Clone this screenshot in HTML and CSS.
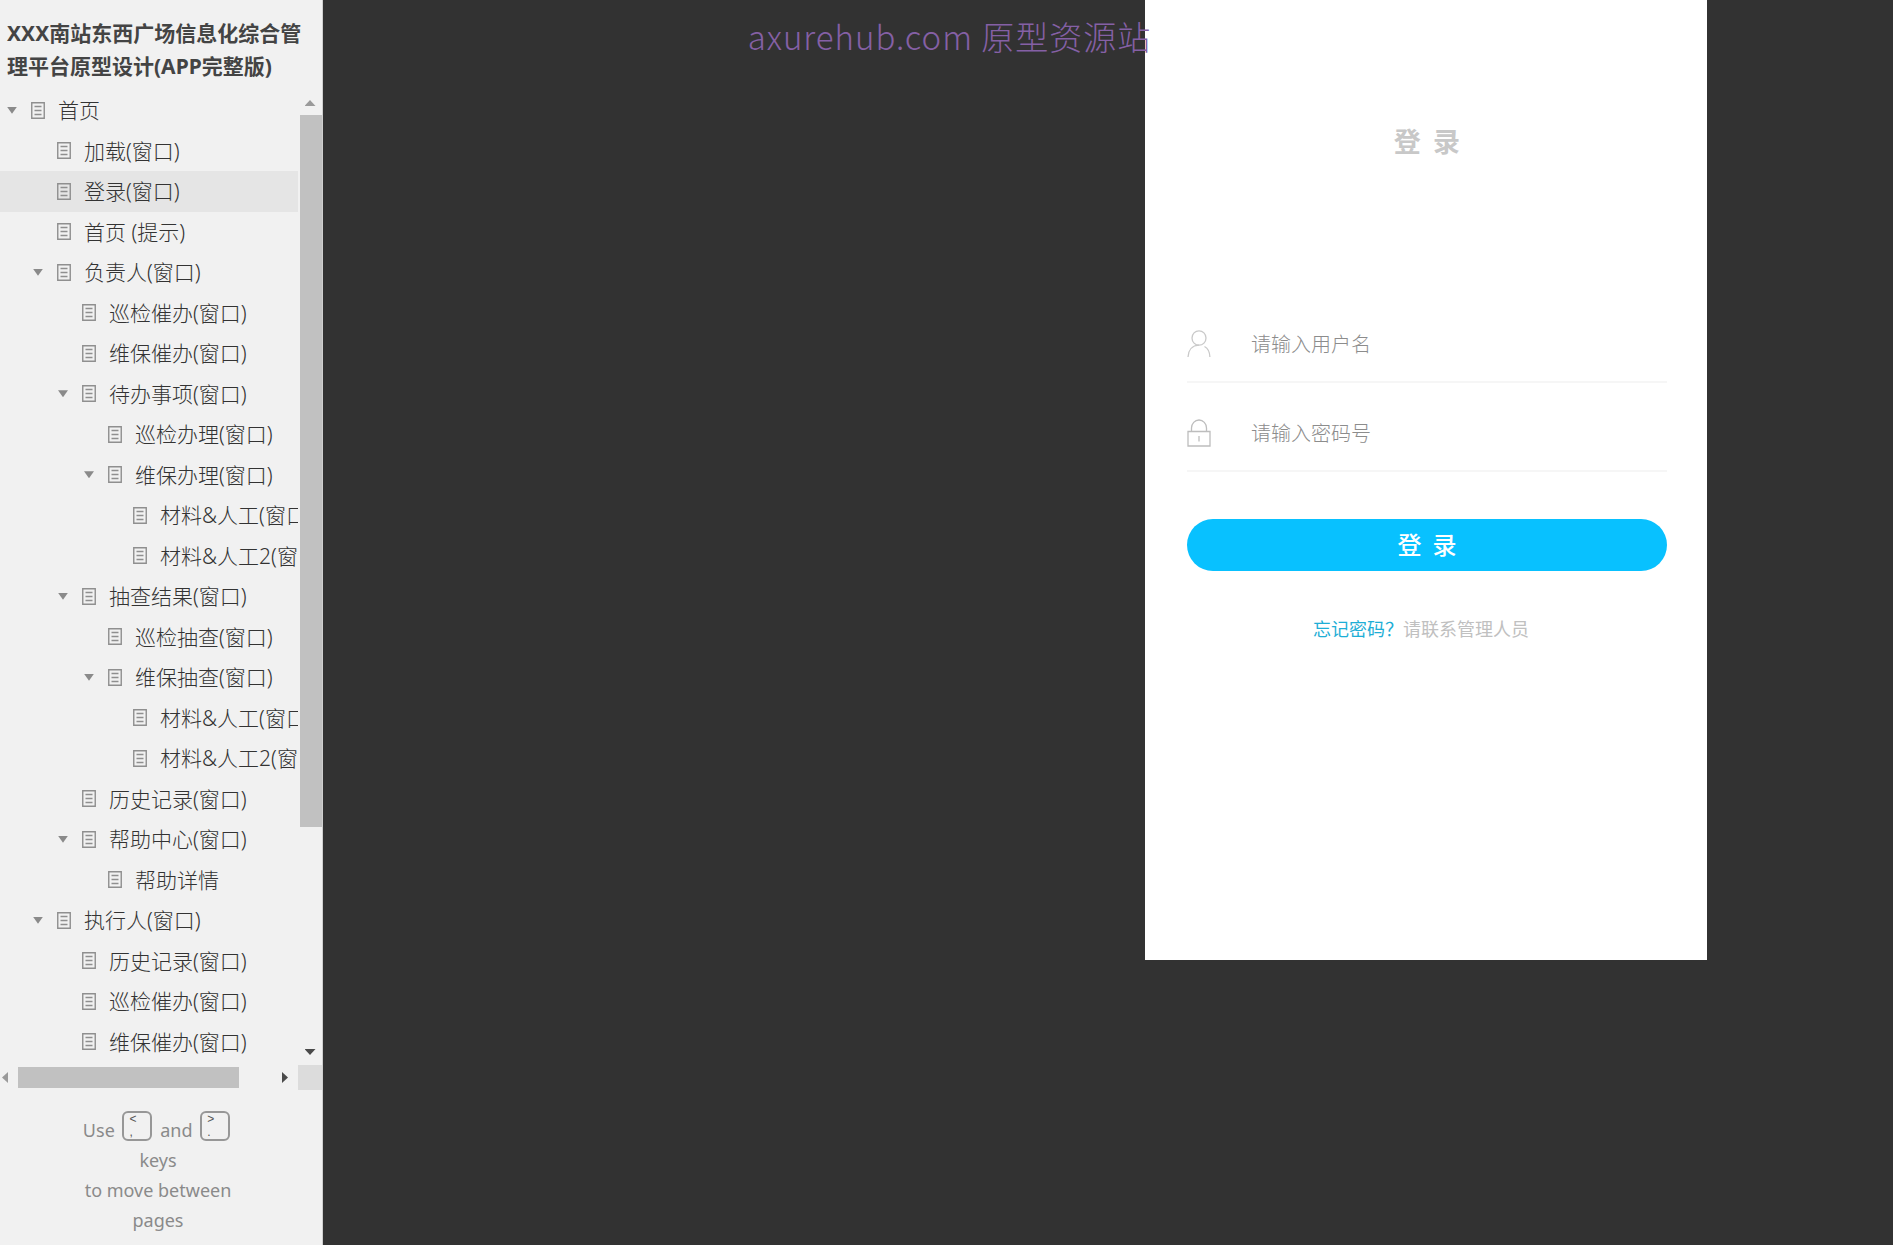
FILE: index.html
```html
<!DOCTYPE html>
<html lang="zh-CN">
<head>
  <meta charset="UTF-8">
  <meta name="viewport" content="width=device-width, initial-scale=1.0">
  <title>登录(窗口)</title>
  <link rel="stylesheet" href="styles.css">
</head>
<body>
  <svg width="0" height="0" class="sprite" aria-hidden="true">
    <symbol id="page" viewBox="0 0 14 17">
      <path d="M.75.75h12.5v15.5H.75zM3.500 4.500h7M3.500 8.500h7M3.500 12.500h7" fill="none" stroke="#8f8f8f" stroke-width="1.4"/>
    </symbol>
  </svg>

  <aside class="sidebar">
    <h1 class="project-name">XXX南站东西广场信息化综合管理平台原型设计(APP完整版)</h1>

    <div class="tree-wrap">
      <ul class="tree" id="tree"></ul>
      <div class="scroll-y">
        <span class="arrow arrow-up"></span>
        <div class="track-y"><div class="thumb-y"></div></div>
        <span class="arrow arrow-down"></span>
      </div>
    </div>

    <div class="scroll-x">
      <span class="arrow arrow-left"></span>
      <div class="track-x"><div class="thumb-x"></div></div>
      <span class="arrow arrow-right"></span>
      <div class="corner"></div>
    </div>

    <footer class="hint">
      <p>Use <kbd><span>&lt;</span><span>,</span></kbd> and <kbd><span>&gt;</span><span>.</span></kbd> keys<br>to move between pages</p>
    </footer>
  </aside>

  <main class="stage">
    <form class="phone">
      <h2 class="phone-title">登&nbsp; 录</h2>

      <div class="field">
        <label for="username" aria-label="用户名">
          <svg width="24" height="28" viewBox="0 0 24 28" fill="none" stroke="#c9c9c9" stroke-width="1.3">
            <ellipse cx="12" cy="8" rx="7" ry="7.200"/>
            <path d="M1 27c.3-6.500 4-11.500 11-11.800M17.500 16.500c3.500 1.800 5.200 5.500 5.400 10.500"/>
          </svg>
        </label>
        <input type="text" id="username" placeholder="请输入用户名">
      </div>

      <div class="field">
        <label for="password" aria-label="密码">
          <svg width="24" height="28" viewBox="0 0 24 28" fill="none" stroke="#bdbdbd" stroke-width="1.3">
            <path d="M1 12.500h22v14.500H1zM4.500 12.500V9a7.500 8 0 0 1 15 0v3.500M12 17v5.500"/>
          </svg>
        </label>
        <input type="password" id="password" placeholder="请输入密码号">
      </div>

      <button type="button" class="login">登&nbsp; 录</button>
      <p class="forgot"><a href="#">忘记密码？</a>请联系管理人员</p>
    </form>
  </main>

  <div class="watermark">axurehub.com 原型资源站</div>

  <script>
    // [level, name, has children]
    const pages = [
      [0, '首页', true],
      [1, '加载(窗口)'],
      [1, '登录(窗口)'],
      [1, '首页 (提示)'],
      [1, '负责人(窗口)', true],
      [2, '巡检催办(窗口)'],
      [2, '维保催办(窗口)'],
      [2, '待办事项(窗口)', true],
      [3, '巡检办理(窗口)'],
      [3, '维保办理(窗口)', true],
      [4, '材料&人工(窗口)'],
      [4, '材料&人工2(窗口)'],
      [2, '抽查结果(窗口)', true],
      [3, '巡检抽查(窗口)'],
      [3, '维保抽查(窗口)', true],
      [4, '材料&人工(窗口)'],
      [4, '材料&人工2(窗口)'],
      [2, '历史记录(窗口)'],
      [2, '帮助中心(窗口)', true],
      [3, '帮助详情'],
      [1, '执行人(窗口)', true],
      [2, '历史记录(窗口)'],
      [2, '巡检催办(窗口)'],
      [2, '维保催办(窗口)']
    ];
    const current = 2;
    const tree = document.getElementById('tree');

    pages.forEach(([level, name, open], i) => {
      const li = document.createElement('li');
      li.className = `node level-${level}` + (i === current ? ' selected' : '');
      li.innerHTML = (open ? '<button class="toggle" aria-label="折叠"></button>' : '<span class="toggle-space"></span>') +
        '<a href="#"><svg width="14" height="17" aria-hidden="true"><use href="#page"/></svg><span></span></a>';
      li.querySelector('a span').textContent = name;
      tree.appendChild(li);
    });
  </script>
</body>
</html>
```
FILE: styles.css
```css
* {
  box-sizing: border-box;
}

body {
  display: flex;
  height: 100vh;
  margin: 0;
  overflow: hidden;
  background-color: #323232;
  font-family: "Noto Sans", "Noto Sans CJK SC", sans-serif;
}

h1, h2, p, ul {
  margin: 0;
  padding: 0;
}

a {
  color: inherit;
  text-decoration: none;
}

.sprite {
  position: absolute;
}

/* sidebar */
.sidebar {
  display: flex;
  flex-direction: column;
  flex: none;
  width: 323px;
  background-color: #f1f1f1;
  border-right: 1px solid #cfcfcf;
  color: #333;
}

.project-name {
  padding: 17px 12px 7px 7px;
  font-size: 21px;
  line-height: 33px;
  color: #444;
}

.tree-wrap {
  display: flex;
  flex: 1;
  min-height: 0;
}

.tree {
  display: grid;
  grid-auto-rows: 1fr;
  flex: 1;
  min-width: 0;
  padding-bottom: 3px;
  overflow: hidden;
  list-style: none;
}

.node {
  display: flex;
  align-items: center;
  min-width: 0;
  overflow: hidden;
  font-size: 21px;
  line-height: 30px;
  font-weight: 300;
  white-space: nowrap;
}

.node a {
  display: flex;
  align-items: center;
  gap: 13px;
}

.node svg {
  flex: none;
}

.selected {
  background-color: #e5e5e5;
}

.level-0 { padding-left: 7px; }
.level-1 { padding-left: 33px; }
.level-2 { padding-left: 58px; }
.level-3 { padding-left: 84px; }
.level-4 { padding-left: 109px; }

.toggle,
.toggle-space {
  flex: none;
  width: 10px;
  height: 7px;
  margin-right: 14px;
  padding: 0;
  border: 0;
}

.toggle {
  background-color: #8a8a8a;
  clip-path: polygon(0 0, 100% 0, 50% 100%);
  cursor: pointer;
}

/* scrollbars */
.scroll-y {
  display: flex;
  flex-direction: column;
  align-items: center;
  gap: 9px;
  width: 24px;
  padding: 10px 0;
}

.track-y {
  flex: 1;
  align-self: stretch;
  padding: 0 0 0 2px;
}

.thumb-y {
  height: 77%;
  background-color: #c1c1c1;
}

.arrow {
  flex: none;
  background-color: #4a4a4a;
}

.arrow-up,
.arrow-down {
  width: 11px;
  height: 6px;
}

.arrow-left,
.arrow-right {
  width: 6px;
  height: 11px;
}

.arrow-up {
  background-color: #9a9a9a;
  clip-path: polygon(50% 0, 100% 100%, 0 100%);
}

.arrow-down {
  clip-path: polygon(0 0, 100% 0, 50% 100%);
}

.arrow-left {
  background-color: #9a9a9a;
  clip-path: polygon(100% 0, 100% 100%, 0 50%);
}

.arrow-right {
  clip-path: polygon(0 0, 100% 50%, 0 100%);
}

.scroll-x {
  display: flex;
  align-items: center;
  gap: 10px;
  height: 25px;
  padding-left: 2px;
}

.track-x {
  flex: 1;
}

.thumb-x {
  width: 87%;
  height: 21px;
  background-color: #c1c1c1;
}

.corner {
  width: 24px;
  height: 25px;
  background-color: #dcdcdc;
}

/* keyboard hint */
.hint {
  height: 155px;
  padding: 21px 70px 0 64px;
  font-size: 18px;
  line-height: 30px;
  text-align: center;
  color: #8a8a8a;
}

kbd {
  display: inline-flex;
  flex-direction: column;
  width: 30px;
  height: 30px;
  margin: 0 3px;
  padding: 0 5px;
  border: 2px solid #979797;
  border-radius: 6px;
  font-family: "Liberation Sans", sans-serif;
  font-size: 12px;
  line-height: 13px;
  text-align: left;
  vertical-align: 14px;
  color: #555;
}

/* login page */
.stage {
  display: flex;
  flex: 1;
  align-items: flex-start;
  justify-content: flex-end;
  padding-right: 186px;
}

.phone {
  width: 562px;
  min-height: 960px;
  padding: 121px 40px 0 42px;
  background-color: #fff;
  font-family: "Noto Sans CJK SC", sans-serif;
}

.phone-title {
  margin-bottom: 145px;
  font-size: 27px;
  line-height: 40px;
  text-align: center;
  color: #c8c8c8;
}

.field {
  display: flex;
  align-items: center;
  gap: 40px;
  height: 77px;
  margin-bottom: 12px;
  border-bottom: 2px solid #f6f6f6;
}

.field label {
  display: flex;
}

.field input {
  flex: 1;
  min-width: 0;
  padding: 0;
  border: 0;
  outline: 0;
  background: none;
  font-family: inherit;
  font-size: 20px;
  font-weight: 300;
  line-height: 30px;
  color: #555;
}

.field input::placeholder {
  color: #8c8c8c;
}

.login {
  display: block;
  width: 100%;
  height: 52px;
  margin-top: 47px;
  padding: 0 0 3px;
  border: 0;
  border-radius: 26px;
  background-color: #08c1ff;
  font-family: inherit;
  font-size: 24px;
  font-weight: 500;
  color: #fff;
  cursor: pointer;
}

.forgot {
  margin-top: 42px;
  padding-right: 12px;
  font-size: 18px;
  line-height: 30px;
  text-align: center;
  color: #c0c0c0;
}

.forgot a {
  color: #1eaed6;
}

.watermark {
  position: absolute;
  top: 12px;
  left: 0;
  right: 0;
  padding-left: 6px;
  font-family: "Noto Sans CJK SC", sans-serif;
  font-size: 33px;
  font-weight: 300;
  line-height: 48px;
  letter-spacing: 1px;
  text-align: center;
  color: #8560a5;
  pointer-events: none;
}
```
